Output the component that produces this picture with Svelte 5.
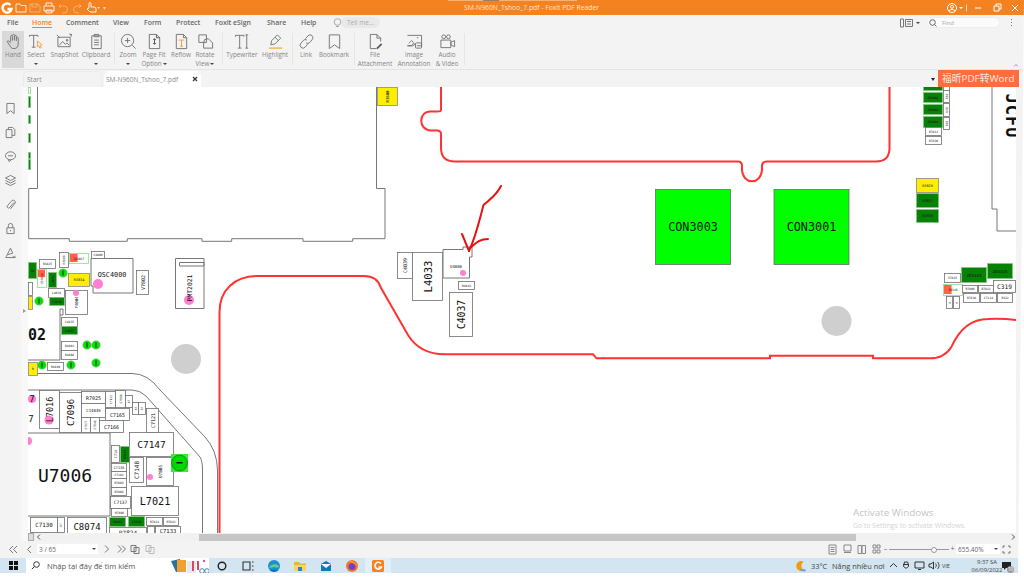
<script>
  const tabs = [
    ["File", 25], ["Home", 34], ["Comment", 47], ["View", 31], ["Form", 32],
    ["Protect", 39], ["Foxit eSign", 52], ["Share", 34], ["Help", 36]
  ];

  const icons = {
    hand: '<path d="M6 9V3.5a1 1 0 0 1 2 0V8m0-5.5a1 1 0 0 1 2 0V8m0-4.5a1 1 0 0 1 2 0V8.5m0-3a1 1 0 0 1 2 0v6c0 3-1.500 5-4.500 5S6 15 5 13L2.500 9.500c-.6-1 .8-1.900 1.600-1L6 10.500"/>',
    select: '<path d="M1.5 4V2.500h9V4M6 2.500V15M4 15h4"/><path stroke="#f7a13c" d="M10 8.500l5 4-2 .5 1 2.500-1.500.5-1-2.500-1.500 1z"/>',
    snap: '<path d="M2 4.500h13v10H2z"/><path d="M1 2l3 3M14 1l3 1M16 1v3"/><path d="M3.500 13l3.500-4 3 3 1.500-1.500 2.500 2.500"/><path d="M11 7h1.500v1.500H11z"/>',
    clip: '<path d="M4 3h10v13.500H4zM6.500 1.500h5V4h-5zM6.500 7.500h5M6.500 10h5M6.500 12.500h5"/>',
    zoom: '<circle cx="8" cy="8" r="6.5"/><path d="M13 13l3.500 3.500M5.200 8h5.600M8 5.200v5.600"/>',
    fit: '<path d="M3.500 1.500h7.500l3.500 3.500v11.500h-11z"/><path d="M11 1.500V5h3.500M9 6v6M7.500 7.500L9 6l1.500 1.500M7.500 10.500L9 12l1.500-1.500" stroke="#555"/>',
    reflow: '<path d="M3.500 1.500h7.500l3.500 3.500v11.500h-11z"/><path d="M11 1.500V5h3.500"/><path stroke="#f59a3a" d="M6 7.500h6M9 7.500V14M7.500 14h3"/>',
    rotate: '<path d="M2 2h8v8H2z"/><path d="M8 7l4-1 4.500 4.500v5.500H7v-5.500z"/>',
    type: '<path d="M1.500 4V2.500h9V4M6 2.500V16M4 16h4M13.500 2v14M12 2h3M12 16h3"/>',
    light: '<path d="M11 2l3.500 3.500-6 6-4.500 1 1-4.500zM8.500 4.500l3.500 3.500"/><path stroke="#f5b342" stroke-width="1.5" d="M2 16h14"/>',
    link: '<path d="M8 6l2.500-3a3 3 0 0 1 4.500 4l-2.500 3a3 3 0 0 1-4 .5M10 12l-2.500 3a3 3 0 0 1-4.500-4l2.500-3a3 3 0 0 1 4-.5"/>',
    mark: '<path d="M3.500 2h11v14.500L9 12.500l-5.500 4z"/>',
    attach: '<path d="M10 16.500H3.500v-15h7l4 4V9M10.500 1.500V5.500h4"/><path stroke="#555" stroke-width="1.8" d="M10.500 16.500l5-5"/>',
    image: '<path d="M1.500 2.500h15v11h-5M7 13.500H1.500z"/><path d="M3 11l3-3 2 2M11.500 5h1.500"/><rect x="10" y="10.500" width="6.500" height="5.500" rx="1"/><circle cx="8" cy="12" r="1"/>',
    video: '<path d="M2 7.500h10.500v8H2zM12.500 10l4-2v6.500l-4-2z"/><rect x="3" y="2" width="4" height="4" rx="2"/><rect x="8" y="2" width="4" height="4" rx="2"/>'
  };

  const tools = [
    { label: "Hand", icon: "hand", w: 22, active: true },
    { label: "Select", icon: "select", w: 24, caret: "below" },
    { label: "SnapShot", icon: "snap", w: 33 },
    { label: "Clipboard", icon: "clip", w: 30, caret: "below" },
    { sep: true, w: 5 },
    { label: "Zoom", icon: "zoom", w: 24, caret: "below" },
    { label: "Page Fit", line2: "Option", icon: "fit", w: 28, caret: "inline" },
    { label: "Reflow", icon: "reflow", w: 26 },
    { label: "Rotate", line2: "View", icon: "rotate", w: 22, caret: "inline" },
    { sep: true, w: 8 },
    { label: "Typewriter", icon: "type", w: 36 },
    { label: "Highlight", icon: "light", w: 30 },
    { sep: true, w: 4 },
    { label: "Link", icon: "link", w: 24 },
    { label: "Bookmark", icon: "mark", w: 32 },
    { sep: true, w: 6 },
    { label: "File", line2: "Attachment", icon: "attach", w: 38 },
    { label: "Image", line2: "Annotation", icon: "image", w: 40 },
    { label: "Audio", line2: "& Video", icon: "video", w: 26 },
    { sep: true, w: 6 }
  ];

  const rail = [
    '<path d="M4 2h10v14l-5-4-5 4z"/>',
    '<path d="M3 5h8v11H3zM6 5V2h6l3 3v8h-4"/>',
    '<ellipse cx="9" cy="8" rx="7" ry="5.5"/><path d="M6 13l1 3 3-2.500M5.500 8h7"/>',
    '<path d="M9 2l7 3.500-7 3.500-7-3.500zM2 9l7 3.500L16 9M2 12.500L9 16l7-3.500"/>',
    '<path d="M14 6l-6.500 7.500a2 2 0 0 1-3-2.500L11 3.500a3 3 0 0 1 4.500 3.500L9 15"/>',
    '<path d="M4 8h10v8H4zM6 8V5a3 3 0 0 1 6 0v3M9 11v2"/>',
    '<path d="M3 15L9 3l3 7-7 2M12 14l2 1.500L16 14M2 16h14"/>'
  ];

  // x, y, w, h, label, kind, vertical, font size (page coordinates of the screenshot)
  const parts = [
    [377, 87, 20, 18, "R3800", "y", 1, 4],
    [28, 87, 2, 6, "", "o"],
    [28, 96, 2, 11, "", "g"], [28, 115, 2, 8, "", "g"], [28, 133, 2, 9, "", "g"], [28, 152, 2, 6, "", "g"], [28, 159, 2, 10, "", "g"],
    [59, 252, 9, 15, "R3809", "w", 1, 3],
    [69, 253, 19, 10, "ZD3017", "o", 0, 3],
    [91, 251, 13, 7, "C4800", "w", 0, 3],
    [39, 259, 16, 9, "R3825", "w", 0, 3],
    [28, 262, 8, 16, "ZD", "g", 0, 3],
    [37, 269, 9, 18, "ZD3026", "o2", 1, 3],
    [48, 272, 8, 15, "L4802", "g", 1, 3],
    [68, 273, 21, 13, "R3834", "y", 0, 3.5],
    [136, 270, 12, 24, "V7802", "w", 1, 5],
    [65, 290, 22, 24, "F4004", "w", 1, 4],
    [48, 288, 16, 9, "L4034", "w", 0, 3],
    [49, 297, 15, 8, "L4036", "g", 0, 3],
    [28, 282, 4, 13, "", "w"], [28, 296, 4, 13, "", "y"],
    [61, 317, 16, 9, "C4835", "w", 0, 3],
    [61, 326, 16, 8, "L4837", "g", 0, 3],
    [61, 341, 16, 9, "R4801", "w", 0, 3],
    [61, 350, 16, 9, "R4808", "w", 0, 3],
    [28, 362, 9, 13, "R", "y", 0, 3],
    [47, 362, 16, 8, "R4840", "w", 0, 3],
    [39, 390, 20, 38, "L7016", "w", 1, 8.5],
    [59, 392, 22, 40, "C7096", "w", 1, 9],
    [81, 391, 24, 12, "R7025", "w", 0, 5],
    [81, 403, 24, 14, "C14849", "w", 0, 4],
    [105, 391, 10, 16, "C7122", "w", 1, 3],
    [115, 390, 10, 17, "C7118", "w", 1, 3],
    [125, 395, 7, 12, "R7", "w", 1, 3],
    [132, 402, 6, 12, "R7", "w", 1, 3],
    [138, 402, 7, 12, "R7", "w", 1, 3],
    [105, 408, 24, 12, "C7165", "w", 0, 5],
    [81, 417, 9, 15, "C7177", "w", 1, 3],
    [90, 417, 9, 15, "C7146", "w", 1, 3],
    [99, 420, 24, 12, "C7166", "w", 0, 5],
    [146, 408, 12, 24, "C7121", "w", 1, 5],
    [129, 432, 44, 24, "C7147", "w", 0, 9.5],
    [111, 445, 8, 17, "C714", "w", 1, 3.5],
    [120, 446, 9, 16, "R7823", "g", 1, 3],
    [111, 463, 15, 8, "C7136", "w", 0, 3.5],
    [111, 471, 15, 7, "C7181", "w", 0, 3],
    [111, 478, 15, 9, "R7803", "w", 0, 3],
    [111, 487, 15, 8, "R7804", "w", 0, 3],
    [110, 496, 20, 12, "C7137", "w", 0, 4.5],
    [111, 508, 16, 8, "R7806", "w", 0, 3],
    [129, 457, 14, 25, "C7148", "w", 1, 6],
    [146, 457, 27, 28, "U7805", "w", 1, 4.5],
    [131, 486, 47, 29, "L7021", "w", 0, 10.2],
    [109, 517, 16, 9, "C8043", "g", 0, 3],
    [128, 516, 16, 10, "C7036", "g", 0, 3],
    [146, 517, 16, 8, "R7821", "w", 0, 3],
    [163, 517, 15, 8, "R7822", "w", 0, 3],
    [30, 517, 27, 15, "C7130", "w", 0, 5.8],
    [57, 517, 7, 15, "R7", "w", 1, 3],
    [67, 517, 39, 18, "C8074", "w", 0, 9],
    [109, 527, 37, 10, "R7824", "w", 0, 6],
    [147, 526, 7, 9, "", "w"],
    [155, 526, 25, 9, "C7133", "w", 0, 5.5],
    [397, 252, 15, 26, "C4039", "w", 1, 5],
    [412, 252, 30, 48, "L4033", "w", 1, 10.6],
    [458, 281, 16, 8, "R4843", "w", 0, 3],
    [449, 292, 23, 44, "C4037", "w", 1, 9.8],
    [923, 85, 19, 5, "", "g"],
    [923, 92, 19, 10, "ZD3002", "g", 0, 3],
    [923, 104, 19, 10, "ZD3003", "g", 0, 3],
    [923, 116, 19, 11, "ZD3004", "g", 0, 3],
    [943, 85, 6, 5, "", "w"],
    [943, 90, 6, 12, "R30", "w", 1, 3],
    [943, 103, 6, 13, "R30", "w", 1, 3],
    [943, 117, 6, 12, "R30", "w", 1, 3],
    [925, 127, 16, 8, "R7811", "w", 0, 3],
    [925, 136, 16, 8, "R7830", "w", 0, 3],
    [916, 178, 22, 14, "R3029", "y", 0, 3.5],
    [916, 193, 22, 14, "R3027", "g", 0, 3.5],
    [916, 209, 22, 13, "R3030", "g", 0, 3.5],
    [961, 267, 25, 15, "ZD3324", "g", 0, 4.2],
    [987, 263, 25, 15, "ZD3325", "g", 0, 4.2],
    [944, 273, 16, 9, "V7815", "w", 0, 3],
    [943, 284, 19, 11, "ZD326", "o3", 0, 3],
    [962, 285, 15, 7, "R7806", "w", 0, 3],
    [978, 285, 15, 7, "R7812", "w", 0, 3],
    [993, 280, 22, 12, "C319", "w", 0, 6.2],
    [963, 293, 16, 9, "R7838", "w", 0, 3],
    [980, 293, 16, 9, "C7114", "w", 0, 3],
    [997, 293, 15, 9, "R322", "w", 0, 3],
    [946, 296, 6, 12, "R", "w", 1, 3],
    [953, 296, 6, 12, "R", "w", 1, 3]
  ];

  const dots = [[63, 273], [39, 301], [87, 345], [96, 345], [96, 363], [42, 365], [71, 365]];
  const pink = [[98, 284, 5], [76, 293, 3], [189, 300, 5], [32, 399, 4], [49, 420, 4.5], [28, 441, 4], [150, 477, 3], [463, 273, 3]];
  const apps = ["cortana", "task", "edge", "files", "mail", "fox", "foxit"];
</script>

<div class="page">
  <header class="titlebar">
    <svg class="logo" width="12" height="12" viewBox="0 0 12 12"><path d="M9.500 3A4.500 4.500 0 1 0 10.500 7H6.500" fill="none" stroke="#fff" stroke-width="2.5"/></svg>
    <svg class="qa" width="100" height="14" viewBox="0 0 100 14" fill="none" stroke="#fff">
      <path d="M3 11V3h4l1 1.500h5V11z" stroke-opacity=".8"/>
      <path d="M17 3h8l2 2v6H17zM19 3v3h5V3" stroke-opacity=".35"/>
      <path d="M31 5h10v5H31zM33 5V2h6v3M33 9h6v3h-6z" stroke-opacity=".85"/>
      <path d="M48 3l-2 2 2 2M46 5h5a3.500 3.500 0 0 1 0 7h-2" stroke-opacity=".35"/>
      <path d="M66 3l2 2-2 2M68 5h-4a3.500 3.500 0 0 0 0 7h2" stroke-opacity=".35"/>
      <path d="M76 7V2.500a1 1 0 0 1 2 0V6h3a2 2 0 0 1 2 2v3H77l-3-3z" stroke-opacity=".9"/>
      <path d="M84 6h3l-1.500 2z" fill="#fff" stroke="none" opacity=".7"/>
      <path d="M90 6h3l-1.500 3z" fill="#fff" stroke="none" opacity=".6"/>
    </svg>
    <div class="title-strip"><span></span></div>
    <span class="title">SM-N960N_Tshoo_7.pdf - Foxit PDF Reader</span>
    <svg class="winctl" width="76" height="14" viewBox="0 0 76 14" fill="none" stroke="#fff">
      <circle cx="7" cy="7" r="4.5"/><circle cx="7" cy="5.8" r="1.5"/><path d="M4 10c1-2 5-2 6 0"/>
      <path d="M14 6h4l-2 2z" fill="#fff" stroke="none"/>
      <path d="M21.500 3.500v7" stroke-opacity=".7"/>
      <path d="M30 7h6"/>
      <path d="M49 5h5v5h-5zM51 5V3h5v5h-2"/>
      <path d="M67 4l6 6M73 4l-6 6"/>
    </svg>
  </header>

  <div class="ribbon">
    <nav class="menu">
      {#each tabs as [name, width]}
        <span class="tab" class:current={name === "Home"} style:width="{width}px"><span>{name}</span></span>
      {/each}
      <svg class="bulb" width="9" height="10" viewBox="0 0 9 10" fill="none" stroke="#aaa"><circle cx="4.5" cy="4" r="3.3"/><path d="M3 8.500h3"/></svg>
      <span class="tell">Tell me...</span>
      <div class="menu-right">
        <svg width="14" height="10" viewBox="0 0 14 10" fill="none" stroke="#777"><path d="M.5 1h3v8h-3zM5.500 1.500h7v7h-7zM7 3.500h4M7 6h4"/></svg>
        <i class="tri"></i>
        <div class="find">
          <svg width="8" height="8" viewBox="0 0 8 8" fill="none" stroke="#666"><circle cx="3.5" cy="3.5" r="2.8"/><path d="M5.500 5.500L7.500 7.500"/></svg>
          <span>Find</span>
        </div>
        <span class="kebab"><b></b><b></b><b></b></span>
      </div>
    </nav>

    <div class="tools">
      {#each tools as t}
        {#if t.sep}
          <span class="sep" style:width="{t.w}px"></span>
        {:else}
          <div class="tool" class:active={t.active} style:width="{t.w}px">
            <svg width="17" height="17" viewBox="0 0 18 18" fill="none" stroke="#747474" stroke-width="1">{@html icons[t.icon]}</svg>
            <span class="lab">{t.label}</span>
            {#if t.line2}
              <span class="lab">{t.line2}{#if t.caret === "inline"}<i class="tri small"></i>{/if}</span>
            {:else if t.caret === "below"}
              <i class="tri small below"></i>
            {/if}
          </div>
        {/if}
      {/each}
    </div>
  </div>

  <div class="docbar">
    <div class="doc start">Start</div>
    <div class="doc open">
      <span>SM-N960N_Tshoo_7.pdf</span>
      <svg width="6" height="6" viewBox="0 0 6 6" stroke="#333" stroke-width="1.2"><path d="M1 1l4 4M5 1L1 5"/></svg>
    </div>
    <svg class="collapse" width="6" height="4" viewBox="0 0 6 4" fill="none" stroke="#999"><path d="M1 3.500L3 1.500 5 3.500"/></svg>
    <i class="tri dark"></i>
    <div class="promo">福昕PDF转Word</div>
  </div>

  <main class="work">
    <aside class="rail">
      <div class="rail-icons">
        {#each rail as d}
          <svg width="13" height="13" viewBox="0 0 18 18" fill="none" stroke="#777" stroke-width="1.3">{@html d}</svg>
        {/each}
      </div>
      <div class="rail-gap"><i class="handle"></i></div>
    </aside>

    <div class="sheet">
      <svg class="board" width="988" height="446" viewBox="28 87 988 446">
        <g fill="none" stroke="#777" stroke-width="1">
          <path d="M37.500 87V188.500H28.700V238.700H69.300V241.300H127.300V238.700H202V241.300H231.700V238.700H303V241.300H352.700V238.700H385V188.500H376.500V87"/>
          <path d="M28 373.500H132Q148 373.500 160 390L205 437Q217 450 217.500 470V533"/>
          <path d="M28 390H132Q140 390 146 396L200 457Q202.500 461 202.500 470V533"/>
          <path d="M60 360V309H63V315H60"/>
          <path d="M28 360H60"/>
          <path d="M175.500 258.500H204V308.500H175.500zM179.500 262.500H204V266H179.500z"/>
          <path d="M91 258.500H133V293H93V286H91z"/>
          <path d="M443 249.500H463V247H472V257H469.500V278H443z"/>
          <path d="M28 433H110V516H28"/>
          <path d="M992 87V209H997V231H1016"/>
        </g>

        {#each parts as [x, y, w, h, label, kind]}
          <rect x={x + 0.5} y={y + 0.5} width={w} height={h} class="part {kind}"/>
          {#if kind === "o2" || kind === "o3" || (kind === "o" && label)}
            <rect x={x + 1} y={y + 1} width={kind === "o2" ? w - 2 : w * 0.4} height={kind === "o2" ? 7 : h - 2} fill="#ff6347"/>
          {/if}
        {/each}

        <rect x="655.500" y="189.500" width="75" height="75" class="part con"/>
        <rect x="774" y="189.500" width="75" height="75" class="part con"/>

        {#each pink as [cx, cy, r]}<circle {cx} {cy} {r} fill="#ff7fd0"/>{/each}

        {#each parts as [x, y, w, h, label, kind, vert, fs]}
          {#if label}
            <text
              class="tag"
              font-size={fs}
              transform="translate({x + w / 2 + 0.5} {y + h / 2 + 0.5}){vert ? ' rotate(-90)' : ''}"
            >{label}</text>
          {/if}
        {/each}

        <text class="tag" font-size="11.8" x="693" y="227">CON3003</text>
        <text class="tag" font-size="11.8" x="811.5" y="227">CON3001</text>
        <text class="tag" font-size="6.8" x="112" y="275">OSC4000</text>
        <text class="tag" font-size="6.4" transform="translate(190 288) rotate(-90)">PMT2021</text>
        <text class="tag" font-size="4" x="456" y="266">U4006</text>
        <text class="tag" font-size="18" x="65" y="475">U7006</text>
        <text class="tag bold" font-size="15" x="37" y="335">02</text>
        <text class="tag" font-size="9" x="32" y="399">7</text>
        <text class="tag" font-size="9" x="31" y="419">7</text>
        <text class="tag wide" font-size="17" transform="translate(1012 116) rotate(90)">JCFU</text>

        {#each dots as [cx, cy]}
          <circle {cx} {cy} r="4.3" fill="#00e600" stroke="#aaa" stroke-width=".5"/>
          <rect x={cx - 0.5} y={cy - 2.5} width="1" height="5" fill="#111"/>
        {/each}
        <rect x="171" y="454" width="17" height="18" fill="#33ee33"/>
        <circle cx="179.5" cy="463" r="8" fill="#00d800" stroke="#444" stroke-width=".6"/>
        <rect x="176.5" y="462" width="6" height="1.5" fill="#111"/>
        <circle cx="186" cy="359" r="15" fill="#cfcfcf"/>
        <circle cx="836.5" cy="321" r="15" fill="#cfcfcf"/>

        <g fill="none" stroke="#f33" stroke-width="2">
          <path d="M441 87V110Q441 111.500 437 111.500H431C418 111 418 130 431 130.500H437Q441 130.500 441 134V148Q441 161.500 455 161.500H738Q742 161.500 742 166V170C743 185 761 185 762 170V166Q762 161.500 767 161.500H876Q889.500 161.500 889.500 148V87"/>
          <path d="M219.500 533V312C219.500 290 235 276 257 276H364C373 276 378 279 380.500 287L408 335C416 348 428 354.300 445 354.300H593L596.500 358.300H770V355.700H873V358.300H930C940 358.300 947 354 951.500 346.700C960 328 972 319 988 319C998 318.500 1008 319 1016 320"/>
        </g>
        <g fill="none" stroke="#e81010" stroke-width="2" stroke-linecap="round" stroke-linejoin="round">
          <path d="M501 186C496 196 490 199 483.500 205C480 218 476 236 469 251"/>
          <path d="M462 234L469 251M488 239C481 239 478 241 470 248"/>
        </g>

        <text class="activate" x="853" y="516">Activate Windows</text>
        <text class="activate sub" x="853" y="528">Go to Settings to activate Windows.</text>
      </svg>

      <div class="hscroll">
        <i class="hleft"></i>
        <svg width="5" height="6" viewBox="0 0 5 6" fill="none" stroke="#555"><path d="M4 .5L1.500 3 4 5.500"/></svg>
        <span class="thumb"></span>
        <svg width="5" height="6" viewBox="0 0 5 6" fill="none" stroke="#555"><path d="M1 .5L3.500 3 1 5.500"/></svg>
      </div>
    </div>
    <div class="vscroll"></div>
  </main>

  <footer class="status">
    <svg class="pager-a" width="30" height="9" viewBox="0 0 30 9" fill="none" stroke="#777">
      <path d="M5 1L1.500 4.500 5 8M9 1L5.500 4.500 9 8M23 1l-3.500 3.500L23 8"/>
    </svg>
    <div class="pagebox"><span>3 / 65</span><i class="tri small"></i></div>
    <svg class="pager-b" width="64" height="10" viewBox="0 0 64 10" fill="none" stroke="#777">
      <path d="M1 1.500L4.500 5 1 8.500M14 1.500L17.500 5 14 8.500M18 1.500L21.500 5 18 8.500"/>
      <path d="M27 1.500h5v6h-5zM30 3.500h5v6h-5z"/>
      <path d="M42 1.500h5v6h-5zM45 3.500h5v6h-5z" stroke="#bbb"/>
    </svg>
    <div class="status-right">
      <svg width="54" height="11" viewBox="0 0 54 11" fill="none" stroke="#888">
        <path d="M2 1h7v9H2zM3.500 3.500h4M3.500 5.500h4M3.500 7.500h4"/>
        <path d="M17 1h7v6h-7zM17 8.500h7"/>
        <path d="M31 1.500h3.500v8H31zM35 1.500h3.500v8H35z"/>
        <path d="M46 1h3v3h-3zM50 1h3v3h-3zM46 6h3v3h-3zM50 6h3v3h-3z"/>
      </svg>
      <div class="zoomer">
        <span class="pm">–</span>
        <div class="track"><i class="knob"></i></div>
        <span class="pm">+</span>
      </div>
      <div class="zoombox"><span>655.40%</span><i class="tri small"></i></div>
      <svg width="9" height="9" viewBox="0 0 9 9" fill="none" stroke="#777"><path d="M1 3V1h2M6 1h2v2M8 6v2H6M3 8H1V6"/></svg>
    </div>
  </footer>

  <div class="taskbar">
    <div class="start-btn">
      <svg width="9" height="9" viewBox="0 0 9 9" fill="#111"><path d="M0 0h4v4H0zM5 0h4v4H5zM0 5h4v4H0zM5 5h4v4H5z"/></svg>
    </div>
    <div class="search">
      <svg width="9" height="9" viewBox="0 0 9 9" fill="none" stroke="#333"><circle cx="5.5" cy="3.5" r="2.8"/><path d="M3.500 5.500L.8 8.200"/></svg>
      <span>Nhập tại đây để tìm kiếm</span>
      <svg class="books" width="38" height="16" viewBox="0 0 38 16">
        <path d="M0 3l9-2 3 12-7 1z" fill="#2f6f9f"/>
        <rect x="6" y="2" width="9" height="12" fill="#f0a030"/>
        <rect x="16" y="3" width="9" height="12" fill="#e8e8ee"/>
        <rect x="21" y="3" width="2" height="10" fill="#d84a5a"/>
        <rect x="26" y="3" width="2" height="9" fill="#d84a5a"/>
        <circle cx="31" cy="13" r="2.3" fill="none" stroke="#4a7fb0"/><circle cx="36" cy="13" r="2.3" fill="none" stroke="#4a7fb0"/>
        <circle cx="33" cy="3" r="1.2" fill="#d050c0"/>
      </svg>
    </div>
    {#each apps as a}
      <div class="app" class:lit={a === "foxit"}>
        <svg width="14" height="14" viewBox="0 0 14 14">
          {#if a === "cortana"}
            <circle cx="7" cy="7" r="3.8" fill="none" stroke="#222" stroke-width="1.4"/>
          {:else if a === "task"}
            <path d="M2 3h7v8H2zM11 3h1.500M11 7h1.500M11 11h1.500" fill="none" stroke="#333" stroke-width="1.1"/>
          {:else if a === "edge"}
            <circle cx="7" cy="7" r="6" fill="#1d8fd0"/><path d="M2 9c1-4 7-5 10-2 0 2-3 2-4 1" fill="#5fd08a"/><path d="M3 11c3 2 6 2 8 0-3 1-6 0-8 0z" fill="#0b5fa8"/>
          {:else if a === "files"}
            <path d="M1 3h5l1 1.500h6V6H1z" fill="#e8b63c"/><path d="M1 6h12v6H1z" fill="#f8d56a"/><path d="M5 8h4v4H5z" fill="#2a86c8"/>
          {:else if a === "mail"}
            <path d="M2 5l5-3 5 3v7H2z" fill="#1279b8"/><path d="M2 5h10L7 9z" fill="#fff"/>
          {:else if a === "fox"}
            <circle cx="7" cy="7" r="6" fill="#f0782a"/><circle cx="7" cy="7.5" r="3.5" fill="#7a3fc0"/><path d="M3 2c3 0 8 1 9 6-1-2-3-4-9-6z" fill="#fbb03b"/>
          {:else}
            <rect x="1" y="1" width="12" height="12" rx="1.5" fill="#f58220"/><path d="M10 4.500A3.400 3.400 0 1 0 10.500 8H7.500" fill="none" stroke="#fff" stroke-width="1.6"/>
          {/if}
        </svg>
      </div>
    {/each}

    <div class="tray">
      <svg class="sun" width="12" height="12" viewBox="0 0 12 12"><path d="M9.500 1.500A5 5 0 1 0 9.500 10.500 6 6 0 0 1 9.500 1.500z" fill="#f39a13"/><path d="M6 11c0-2 4-3 6-1l-1 1.500z" fill="#6aa6d8"/></svg>
      <span class="temp">33°C</span>
      <span class="sky">Nắng nhiều nơi</span>
      <svg class="tray-icons" width="52" height="11" viewBox="0 0 52 11" fill="none" stroke="#333">
        <path d="M1 7l3.500-3.500L8 7"/>
        <path d="M14 4.500h6M15.500 2h3l1 2.500v2l-2 1.500h-1l-2-1.500z"/>
        <path d="M26 2h9v6h-9zM29 9.500h3"/>
        <path d="M40 4h2l2.500-2v7L42 7h-2zM46.500 3.500c1 1 1 3 0 4M48.500 2c2 2 2 5 0 7"/>
      </svg>
      <span class="lang">VIE</span>
      <div class="clock"><span>9:37 SA</span><span>06/09/2022</span></div>
      <div class="note">
        <svg width="11" height="10" viewBox="0 0 11 10" fill="#222"><path d="M1 1h9v6H5L3 9V7H1z"/></svg>
        <span>10</span>
      </div>
    </div>
  </div>
</div>

<style>
  :global(body) {
    margin: 0;
    background: #fff;
  }

  .page {
    display: flex;
    flex-direction: column;
    width: 1024px;
    height: 573px;
    overflow: hidden;
    font-family: "Open Sans", "Noto Sans", sans-serif;
    clip-path: polygon(0 0, 1024px 0, 1018px 573px, 0 573px);
    background: #f3f3f3;
  }

  .tri {
    display: inline-block;
    width: 0;
    height: 0;
    border-left: 2.5px solid transparent;
    border-right: 2.5px solid transparent;
    border-top: 3px solid #666;
  }

  .tri.small {
    border-left-width: 2px;
    border-right-width: 2px;
    border-top: 2px solid #444;
    margin-left: 1px;
    vertical-align: middle;
  }

  .tri.below {
    margin: 0;
  }

  .titlebar {
    position: relative;
    display: flex;
    align-items: center;
    flex: none;
    height: 15px;
    background: #f58220;
    color: #fff;
  }

  .logo {
    margin-left: 1px;
    flex: none;
  }

  .qa {
    flex: none;
  }

  .title-strip {
    position: absolute;
    left: 448px;
    top: 0;
    width: 129px;
    height: 1px;
    background: #f9b070;
  }

  .title-strip span {
    display: block;
    width: 16px;
    height: 1px;
    margin-left: 35px;
    background: #a08060;
  }

  .title {
    position: absolute;
    left: 464px;
    top: 3px;
    font-size: 6.8px;
    line-height: 10px;
    color: #fde3c8;
    white-space: nowrap;
  }

  .winctl {
    margin-left: auto;
    margin-right: 3px;
  }

  .ribbon {
    flex: none;
    height: 55px;
    border-bottom: 1px solid #e4e4e4;
    box-sizing: border-box;
  }

  .menu {
    display: flex;
    align-items: center;
    height: 15px;
    padding-left: 7px;
    font-size: 6.9px;
    font-weight: 600;
    color: #666;
  }

  .tab {
    flex: none;
    box-sizing: border-box;
    white-space: nowrap;
  }

  .tab.current span {
    display: inline-block;
    color: #ee8126;
    border-bottom: 1px solid #ee8126;
    line-height: 9px;
  }

  .bulb {
    margin-left: -4px;
    flex: none;
  }

  .tell {
    margin-left: -1px;
    padding: 0 7px 0 6px;
    width: 26px;
    height: 11px;
    line-height: 11px;
    background: #e9e9e9;
    border-radius: 6px;
    font-size: 6.5px;
    font-weight: 400;
    color: #aaa;
    white-space: nowrap;
  }

  .menu-right {
    display: flex;
    align-items: center;
    margin-left: auto;
    height: 15px;
  }

  .menu-right .tri {
    border-top-color: #444;
    margin: 0 6px 0 2px;
    border-left-width: 2px;
    border-right-width: 2px;
    border-top-width: 2px;
  }

  .find {
    display: flex;
    align-items: center;
    gap: 5px;
    box-sizing: border-box;
    width: 74px;
    height: 11px;
    padding-left: 2px;
    background: #fbfbfb;
    border: 1px solid #ededed;
    border-radius: 6px;
    font-size: 6px;
    font-weight: 400;
    color: #aaa;
  }

  .kebab {
    display: flex;
    flex-direction: column;
    gap: 2px;
    margin: 0 12px 0 11px;
  }

  .kebab b {
    width: 1px;
    height: 1px;
    background: #777;
  }

  .tools {
    display: flex;
    padding: 0 0 0 2px;
    height: 38px;
    margin-top: 1px;
  }

  .tool {
    display: flex;
    flex-direction: column;
    align-items: center;
    flex: none;
    height: 37px;
    padding-top: 1.5px;
    box-sizing: border-box;
    font-size: 6.3px;
    line-height: 8.5px;
    color: #858585;
    white-space: nowrap;
  }

  .tool svg {
    margin-bottom: 1.5px;
    flex: none;
  }

  .tool .lab {
    display: block;
  }

  .tool.active {
    background: #d9d9d9;
  }

  .tool .below {
    margin-top: 3px;
  }

  .sep {
    position: relative;
    flex: none;
  }

  .sep::after {
    content: "";
    position: absolute;
    right: 1px;
    top: 2px;
    height: 32px;
    width: 1px;
    background: #e6e6e6;
  }

  .docbar {
    position: relative;
    display: flex;
    align-items: flex-end;
    flex: none;
    height: 17px;
    padding-left: 23px;
    font-size: 6.5px;
    color: #888;
  }

  .doc {
    box-sizing: border-box;
    height: 16px;
    line-height: 15px;
    white-space: nowrap;
  }

  .doc.start {
    width: 79px;
    padding-left: 3px;
    border: 1px solid #ebebeb;
    border-bottom: none;
    border-radius: 5px 5px 0 0;
  }

  .doc.open {
    display: flex;
    align-items: center;
    justify-content: space-between;
    width: 97px;
    margin-left: 2px;
    padding: 0 3px 0 2px;
    background: #fff;
    border-radius: 5px 5px 0 0;
    color: #8a8a8a;
  }

  .collapse {
    position: absolute;
    right: 5px;
    top: -7px;
  }

  .tri.dark {
    border-top-color: #222;
    margin-left: auto;
    margin-right: 3px;
    margin-bottom: 6px;
  }

  .promo {
    box-sizing: border-box;
    width: 81px;
    height: 17px;
    margin-right: 5px;
    padding-left: 4px;
    background: #ff6d3f;
    color: #ffe9df;
    font-family: "Open Sans", "Noto Sans CJK SC", sans-serif;
    font-size: 9.8px;
    line-height: 17px;
    white-space: nowrap;
  }

  .work {
    display: flex;
    flex: none;
    height: 454px;
    background: #fff;
  }

  .rail {
    display: flex;
    flex: none;
    width: 28px;
  }

  .rail-icons {
    display: flex;
    flex-direction: column;
    align-items: center;
    gap: 11px;
    width: 21px;
    padding-top: 15px;
    box-sizing: border-box;
    background: #f3f3f3;
  }

  .rail-gap {
    display: flex;
    align-items: center;
    justify-content: center;
    width: 7px;
    background: #f8f8f8;
    padding-bottom: 6px;
  }

  .handle {
    width: 0;
    height: 0;
    border-top: 2px solid transparent;
    border-bottom: 2px solid transparent;
    border-left: 3px solid #999;
  }

  .sheet {
    display: flex;
    flex-direction: column;
    width: 988px;
    flex: none;
  }

  .board {
    display: block;
    flex: none;
  }

  .part {
    stroke: #6f6f6f;
    stroke-width: 0.8;
    fill: #fff;
  }

  .part.g {
    fill: #078207;
    stroke: #88c488;
  }

  .part.y {
    fill: #ffee00;
    stroke: #888;
  }

  .part.con {
    fill: #00ff00;
    stroke: #6a6a6a;
  }

  .part.o,
  .part.o2,
  .part.o3 {
    stroke: #86e086;
  }

  .tag {
    font-family: "DejaVu Sans Mono", monospace;
    text-anchor: middle;
    dominant-baseline: central;
    fill: #111;
  }

  .tag.bold {
    font-weight: 700;
  }

  .tag.wide {
    font-weight: 700;
    letter-spacing: 1px;
  }

  .activate {
    font-size: 9.8px;
    fill: #c4c4c4;
  }

  .activate.sub {
    font-size: 6.9px;
    fill: #d4d4d4;
  }

  .hscroll {
    display: flex;
    align-items: center;
    height: 8px;
    background: #f1f1f1;
    gap: 2px;
  }

  .hleft {
    width: 4px;
    height: 6px;
    border: 1px solid #aaa;
    background: #ddd;
  }

  .thumb {
    height: 7px;
    width: 657px;
    margin-left: 156px;
    margin-right: 153px;
    background: #c6c6c6;
  }

  .vscroll {
    flex: none;
    width: 8px;
    background: #f3f3f3;
  }

  .status {
    display: flex;
    align-items: center;
    flex: none;
    height: 16px;
    background: #f3f3f3;
  }

  .pager-a {
    margin-left: 8px;
    margin-right: -1px;
    flex: none;
  }

  .pagebox {
    display: flex;
    align-items: center;
    justify-content: space-between;
    box-sizing: border-box;
    width: 61px;
    height: 10px;
    padding: 0 2px;
    background: #fff;
    font-size: 6.5px;
    color: #666;
  }

  .pager-b {
    margin-left: 6px;
    flex: none;
  }

  .status-right {
    display: flex;
    align-items: center;
    margin-left: auto;
    padding-right: 13px;
    gap: 1px;
  }

  .zoomer {
    display: flex;
    align-items: center;
    width: 72px;
    font-size: 7px;
    color: #666;
    gap: 1px;
    margin-left: 1.5px;
  }

  .pm {
    width: 5px;
    text-align: center;
    line-height: 8px;
  }

  .track {
    position: relative;
    flex: 1;
    height: 1px;
    background: #999;
  }

  .knob {
    position: absolute;
    left: 42px;
    top: -2px;
    width: 4px;
    height: 4px;
    background: #fff;
    border: 1px solid #999;
    border-radius: 50%;
  }

  .zoombox {
    display: flex;
    align-items: center;
    justify-content: space-between;
    box-sizing: border-box;
    width: 44px;
    height: 10px;
    padding: 0 2px;
    margin-right: 1px;
    background: #fff;
    font-size: 6.5px;
    color: #666;
  }

  .taskbar {
    display: flex;
    align-items: center;
    flex: none;
    height: 15px;
    margin-top: 1px;
    background: #d2e5f0;
  }

  .start-btn {
    display: flex;
    align-items: center;
    justify-content: center;
    flex: none;
    width: 26px;
  }

  .search {
    display: flex;
    align-items: center;
    flex: none;
    box-sizing: border-box;
    width: 183px;
    height: 15px;
    padding-left: 5px;
    background: #fff;
    font-size: 7.6px;
    color: #555;
    white-space: nowrap;
  }

  .search span {
    margin-left: 7px;
  }

  .books {
    margin-left: auto;
    flex: none;
  }

  .app {
    display: flex;
    align-items: center;
    justify-content: center;
    flex: none;
    width: 26px;
    height: 15px;
  }

  .app.lit {
    background: #e2eff6;
  }

  .tray {
    display: flex;
    align-items: center;
    margin-left: auto;
    padding-right: 12px;
    font-size: 7.4px;
    color: #444;
    white-space: nowrap;
  }

  .sun {
    flex: none;
  }

  .temp {
    margin-left: 5px;
    width: 14px;
    flex: none;
  }

  .sky {
    margin-left: 7px;
    width: 57px;
    flex: none;
  }

  .tray-icons {
    flex: none;
  }

  .lang {
    margin-left: 1px;
    width: 30px;
    font-size: 5.5px;
    flex: none;
  }

  .clock {
    display: flex;
    flex-direction: column;
    align-items: center;
    width: 30px;
    height: 15px;
    line-height: 8px;
    font-size: 5.8px;
    flex: none;
  }

  .note {
    position: relative;
    margin-left: -1px;
    width: 11px;
    height: 10px;
    flex: none;
  }

  .note span {
    position: absolute;
    right: -2px;
    bottom: -2px;
    width: 7px;
    height: 7px;
    border-radius: 50%;
    background: #999;
    color: #fff;
    font-size: 4.5px;
    line-height: 7px;
    text-align: center;
  }
</style>
